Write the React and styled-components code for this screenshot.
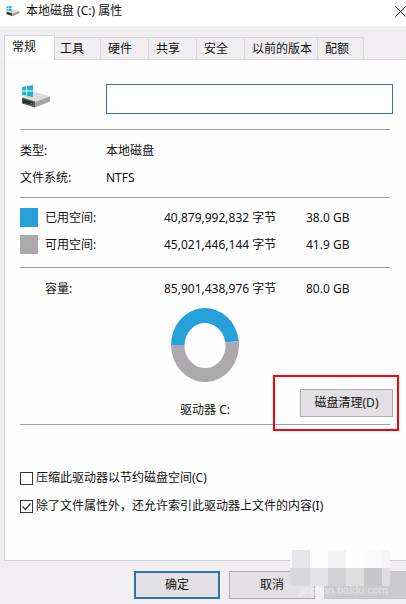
import React, { useState } from 'react';
import styled, { createGlobalStyle } from 'styled-components';

const GlobalStyle = createGlobalStyle`
  * {
    box-sizing: border-box;
  }

  body {
    margin: 0;
    background: #f0eef1;
    overflow: hidden;
  }

  body, button, input, table {
    font-family: "Noto Sans", "Noto Sans CJK SC", sans-serif;
    font-size: 12px;
    line-height: 18px;
    color: #111;
  }
`;

const Dialog = styled.div`
  display: flex;
  flex-direction: column;
  min-height: 100vh;
  background: #f0eef1;
`;

const TitleBar = styled.header`
  display: flex;
  align-items: center;
  height: 26px;
  padding-left: 6px;
  padding-bottom: 4px;
  background: #fff;
`;

const Title = styled.h1`
  flex: 1;
  margin: 0 0 0 6px;
  font-size: 12px;
  font-weight: normal;
`;

const CloseButton = styled.button`
  display: flex;
  padding: 0;
  border: none;
  background: none;
`;

const TabList = styled.div`
  display: flex;
  align-items: flex-end;
  padding: 9px 0 0 4px;
`;

const Tab = styled.button`
  position: relative;
  height: ${({ $active }) => ($active ? 25 : 22)}px;
  margin-bottom: ${({ $active }) => ($active ? -1 : 0)}px;
  padding: ${({ $active }) => ($active ? '0 18px 3px 7px' : '0 16px 0 7px')};
  border: 1px solid #d9d7dc;
  border-left-width: ${({ $active }) => ($active ? 1 : 0)}px;
  border-bottom: none;
  background: ${({ $active }) => ($active ? '#fff' : '#f0eef1')};
  white-space: nowrap;

  &:nth-child(2) {
    padding-left: 5px;
  }

  &:nth-child(n + 6) {
    padding-right: 5px;
  }

  &:last-child {
    padding-right: 14px;
  }
`;

const Panel = styled.main`
  margin-left: 4px;
  padding: 24px 16px 45px 15px;
  border: 1px solid #d4d1d8;
  border-right: none;
  background: #fefefe;
`;

const NameRow = styled.div`
  display: flex;
  align-items: flex-start;
  margin-right: -3px;
  padding-bottom: 15px;
`;

const IconCell = styled.div`
  width: 86px;
  padding-left: 1px;
`;

const NameInput = styled.input`
  flex: 1;
  min-width: 0;
  height: 30px;
  padding: 0 6px;
  border: 1px solid #347a91;
  outline: none;
  background: #fff;
`;

const Divider = styled.hr`
  height: 1px;
  margin: 0;
  border: none;
  background: #a0a0a2;
`;

const InfoList = styled.dl`
  display: grid;
  grid-template-columns: 86px 1fr;
  row-gap: 9px;
  margin: 0;
  padding: 12px 0 10px;
`;

const InfoLabel = styled.dt`
  margin: 0;
`;

const InfoValue = styled.dd`
  margin: 0;
`;

const UsageTable = styled.table`
  width: 100%;
  table-layout: fixed;
  border-collapse: collapse;

  th, td {
    height: 27px;
    padding: 0;
    font-weight: normal;
    text-align: left;
    white-space: nowrap;
  }

  tbody::before, tbody::after {
    content: "";
    display: table-row;
    height: 6px;
  }

  tbody::after {
    height: 9px;
  }

  tfoot th, tfoot td {
    height: 31px;
    padding-top: 12px;
    border-top: 1px solid #a0a0a2;
  }
`;

const Swatch = styled.span`
  display: block;
  width: 18px;
  height: 19px;
  background: ${({ $color }) => $color};
`;

const ChartRow = styled.div`
  display: grid;
  grid-template-columns: 1fr auto 1fr;
  padding: 10px 0 5px;
`;

const Chart = styled.figure`
  display: flex;
  flex-direction: column;
  align-items: center;
  grid-column: 2;
  gap: 19px;
  margin: 0;
`;

const Highlight = styled.div`
  position: relative;
  align-self: end;
  justify-self: end;
  margin: 0 -3px 2px 0;

  &::after {
    content: "";
    position: absolute;
    inset: -14px -6px -14px -27px;
    border: 2px solid #fb0007;
    pointer-events: none;
  }
`;

const Button = styled.button`
  flex-shrink: 0;
  width: ${({ $wide }) => ($wide ? 93 : 86)}px;
  height: 28px;
  padding: 0;
  border: ${({ $primary }) => ($primary ? '2px solid #31759d' : '1px solid #adabb0')};
  background: #e2e0e4;

  &:disabled {
    border-color: #c4c3c6;
    background: #cbcacd;
  }
`;

const Options = styled.div`
  display: flex;
  flex-direction: column;
  gap: 10px;
  padding-top: 44px;
`;

const Option = styled.label`
  display: flex;
  align-items: center;
  gap: 3px;
  white-space: nowrap;
`;

const Checkbox = styled.input`
  appearance: none;
  flex-shrink: 0;
  width: 13px;
  height: 13px;
  margin: 0;
  border: 1px solid #333;
  background: #fff;

  &:checked {
    background: #fff url("data:image/svg+xml,%3Csvg xmlns='http://www.w3.org/2000/svg' viewBox='0 0 11 11'%3E%3Cpath d='M1.5 5.5l3 3 5-6' fill='none' stroke='%23333' stroke-width='1.2'/%3E%3C/svg%3E");
  }
`;

const Footer = styled.footer`
  position: relative;
  display: flex;
  justify-content: flex-end;
  gap: 9px;
  margin-right: -4px;
  padding-top: 10px;
`;

const Mosaic = styled.div`
  position: absolute;
  top: -11px;
  right: 20px;
  display: grid;
  grid-template-columns: 2px repeat(5, 18px) 8px;
  grid-auto-rows: 18px;
`;

const MosaicCell = styled.span`
  background: ${({ $color }) => $color};
`;

const Watermark = styled.span`
  position: absolute;
  right: 22px;
  bottom: 0;
  font-family: "Liberation Sans", sans-serif;
  font-size: 11px;
  color: rgba(255, 255, 255, 0.5);
`;

const TABS = ['常规', '工具', '硬件', '共享', '安全', '以前的版本', '配额'];

const USAGE = [
  { label: '已用空间:', bytes: '40,879,992,832 字节', size: '38.0 GB', color: '#26a0da' },
  { label: '可用空间:', bytes: '45,021,446,144 字节', size: '41.9 GB', color: '#aca9ae' },
];

const MOSAIC = [
  '#faf9fb', '#e8e6ea', '#fdfdfe', '#f4f3f5', '#fefefe', '#fbfafc', '#f7f5f9',
  '#dddbde', '#d8d7da', '#e4e3e5', '#d2d3d5', '#dfdfe0', '#c6c6c9', '#dfdde1',
];

function DriveIcon({ width, height }) {
  return (
    <svg width={width} height={height} viewBox="0 0 30 24" aria-hidden="true">
      <path d="M1 13 L14 7 L29 12 L14 18 Z" fill="#dcdcdd" />
      <path d="M1 13 L14 17 L14 23 L1 19 Z" fill="#5b5b5d" />
      <path d="M14 17.500 L29 12 L29 17 L14 23 Z" fill="#a5a4a6" />
      <path d="M2 15 L12 17.500 L12 20.500 L2 18 Z" fill="#2a2a2c" />
      <path d="M9.500 18.200 L11.500 18.700 L11.500 20 L9.500 19.500 Z" fill="#6f8f6c" />
      <path d="M1 2.500 L5 1.800 L5 6 L1 6 Z M6 1.600 L12 0.500 L12 6 L6 6 Z M1 7 L5 7 L5 11.200 L1 10.500 Z M6 7 L12 7 L12 12.500 L6 11.400 Z" fill="#20b3d2" />
    </svg>
  );
}

function UsageChart() {
  return (
    <svg width="68" height="74" viewBox="0 0 68 74" aria-hidden="true">
      <path d="M0 37 A34 37 0 0 1 67.800 33 L54.300 34.500 A20.500 22.500 0 0 0 13.500 37 Z" fill="#26a0da" />
      <path d="M67.800 33 A34 37 0 1 1 0 37 L13.500 37 A20.500 22.500 0 1 0 54.300 34.500 Z" fill="#aca9ae" />
    </svg>
  );
}

function App() {
  const [activeTab, setActiveTab] = useState(0);
  const [name, setName] = useState('');
  const [compress, setCompress] = useState(false);
  const [index, setIndex] = useState(true);

  return (
    <Dialog>
      <GlobalStyle />
      <TitleBar>
        <DriveIcon width={14} height={12} />
        <Title>本地磁盘 (C:) 属性</Title>
        <CloseButton aria-label="关闭">
          <svg width="11" height="11" viewBox="0 0 11 11">
            <path d="M0.500 0.500 L10.500 10.500 M10.500 0.500 L0.500 10.500" stroke="#111" />
          </svg>
        </CloseButton>
      </TitleBar>

      <TabList role="tablist">
        {TABS.map((tab, i) => (
          <Tab
            key={tab}
            role="tab"
            aria-selected={i === activeTab}
            $active={i === activeTab}
            onClick={() => setActiveTab(i)}
          >
            {tab}
          </Tab>
        ))}
      </TabList>

      <Panel>
        <NameRow>
          <IconCell>
            <DriveIcon width={30} height={25} />
          </IconCell>
          <NameInput aria-label="名称" value={name} onChange={(e) => setName(e.target.value)} />
        </NameRow>
        <Divider />

        <InfoList>
          <InfoLabel>类型:</InfoLabel>
          <InfoValue>本地磁盘</InfoValue>
          <InfoLabel>文件系统:</InfoLabel>
          <InfoValue>NTFS</InfoValue>
        </InfoList>
        <Divider />

        <UsageTable>
          <colgroup>
            <col width="25" />
            <col width="119" />
            <col width="142" />
            <col />
          </colgroup>
          <tbody>
            {USAGE.map((row) => (
              <tr key={row.label}>
                <td><Swatch $color={row.color} /></td>
                <th scope="row">{row.label}</th>
                <td>{row.bytes}</td>
                <td>{row.size}</td>
              </tr>
            ))}
          </tbody>
          <tfoot>
            <tr>
              <td />
              <th scope="row">容量:</th>
              <td>85,901,438,976 字节</td>
              <td>80.0 GB</td>
            </tr>
          </tfoot>
        </UsageTable>

        <ChartRow>
          <Chart>
            <UsageChart />
            <figcaption>驱动器 C:</figcaption>
          </Chart>
          <Highlight>
            <Button $wide>磁盘清理(D)</Button>
          </Highlight>
        </ChartRow>
        <Divider />

        <Options>
          <Option>
            <Checkbox type="checkbox" checked={compress} onChange={(e) => setCompress(e.target.checked)} />
            压缩此驱动器以节约磁盘空间(C)
          </Option>
          <Option>
            <Checkbox type="checkbox" checked={index} onChange={(e) => setIndex(e.target.checked)} />
            除了文件属性外，还允许索引此驱动器上文件的内容(I)
          </Option>
        </Options>
      </Panel>

      <Footer>
        <Button $primary>确定</Button>
        <Button>取消</Button>
        <Button disabled aria-label="应用" />
        <Mosaic aria-hidden="true">
          {MOSAIC.map((color, i) => (
            <MosaicCell key={i} $color={color} />
          ))}
        </Mosaic>
        <Watermark>jingyan.baidu.com</Watermark>
      </Footer>
    </Dialog>
  );
}

export default App;
